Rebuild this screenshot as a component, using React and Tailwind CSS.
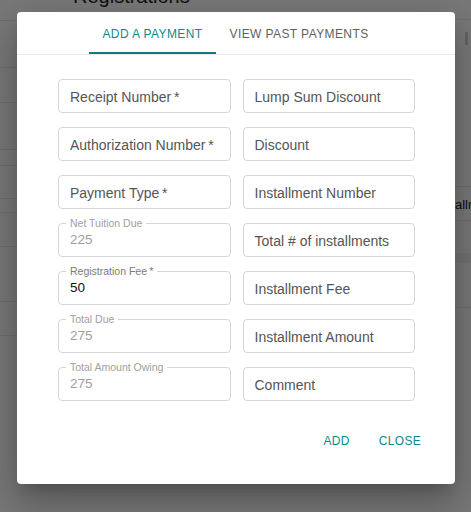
import React from "react";

function PlainField({ label }) {
  return (
    <div className="h-[34px] border border-[#d6d6d6] rounded-[4px] pl-[11px] pt-[2px] flex items-center text-[14px] text-[#555555] whitespace-nowrap">
      {label}
    </div>
  );
}

function NotchField({ label, value, dark }) {
  return (
    <div className="relative h-[34px] border border-[#d6d6d6] rounded-[4px] pl-[11px] pt-[1px] flex items-center">
      <span
        className={`absolute left-[7px] top-[-7px] px-[4px] bg-white text-[10.5px] leading-[12px] whitespace-nowrap ${
          dark ? "text-[#7a7a7a]" : "text-[#a0a0a0]"
        }`}
      >
        {label}
      </span>
      <span className={`text-[13.5px] ${dark ? "text-[#111111]" : "text-[#9e9e9e]"}`}>{value}</span>
    </div>
  );
}

export default function App() {
  const leftRows = [21, 47, 35, 47, 16, 33, 14, 34, 55, 34];
  return (
    <div className="relative w-[471px] h-[512px] overflow-hidden bg-[#f3f3f3] font-['Liberation_Sans',Arial,sans-serif]">
      {/* underlying page */}
      <div className="flex h-full">
        <div className="w-[60px] flex flex-col">
          {leftRows.map((h, i) => (
            <div key={i} style={{ height: h }} className="border-b border-[#dcdcdc] shrink-0" />
          ))}
          <div className="pt-[14px] text-[13px] leading-[14px] text-[#1a1aa0] -ml-[4px]">t</div>
        </div>
        <div className="flex-1">
          <div className="mt-[-14px] ml-[13px] text-[20px] leading-[20px] text-[#222222]">Registrations</div>
        </div>
        <div className="w-[41px] flex flex-col">
          <div className="h-[20px] border-b border-[#dcdcdc] shrink-0" />
          <div className="h-[167px] border-b border-[#dcdcdc] shrink-0 flex justify-end pr-[3px] pt-[12px]">
            <div className="w-[3px] h-[13px] bg-[#c8c8c8]" />
          </div>
          <div className="h-[34px] border-b border-[#dcdcdc] shrink-0 flex items-center pl-[4px] pt-[2px] text-[13px] text-[#222222] whitespace-nowrap">
            Installments
          </div>
          <div className="h-[32px] shrink-0" />
          <div className="h-[10px] shrink-0 bg-[#e6e6e6]" />
          <div className="h-[45px] border-b border-[#dcdcdc] shrink-0" />
        </div>
      </div>

      {/* backdrop */}
      <div className="absolute inset-0 bg-black/50" />

      {/* dialog */}
      <div className="absolute left-[17px] top-[12px] w-[438px] h-[472px] bg-white rounded-[4px] shadow-[0_11px_15px_-7px_rgba(0,0,0,0.2),0_24px_38px_3px_rgba(0,0,0,0.14),0_9px_46px_8px_rgba(0,0,0,0.12)] flex flex-col">
        <div className="flex justify-center border-b border-[#e8e8e8]">
          <div className="flex h-[42px]">
            <div className="relative px-[13px] pt-[1px] flex items-center text-[12px] tracking-[0.4px] text-[#10878c]">
              ADD A PAYMENT
              <span className="absolute left-0 right-0 bottom-0 h-[2px] bg-[#157a7d]" />
            </div>
            <div className="px-[14px] pt-[1px] flex items-center text-[12px] tracking-[0.4px] text-[#5f5f5f]">
              VIEW PAST PAYMENTS
            </div>
          </div>
        </div>

        <div className="mt-[24px] pl-[41px] pr-[40px] grid grid-cols-2 gap-x-[12px] gap-y-[14px]">
          <PlainField label={"Receipt Number\u2009*"} />
          <PlainField label="Lump Sum Discount" />
          <PlainField label={"Authorization Number\u2009*"} />
          <PlainField label="Discount" />
          <PlainField label={"Payment Type\u2009*"} />
          <PlainField label="Installment Number" />
          <NotchField label="Net Tuition Due" value="225" />
          <PlainField label="Total # of installments" />
          <NotchField label={"Registration Fee\u2009*"} value="50" dark />
          <PlainField label="Installment Fee" />
          <NotchField label="Total Due" value="275" />
          <PlainField label="Installment Amount" />
          <NotchField label="Total Amount Owing" value="275" />
          <PlainField label="Comment" />
        </div>

        <div className="mt-[22px] h-[36px] flex justify-end items-center gap-[29px] pr-[34px] text-[12px] tracking-[0.3px] text-[#10878c]">
          <span>ADD</span>
          <span>CLOSE</span>
        </div>
      </div>
    </div>
  );
}
